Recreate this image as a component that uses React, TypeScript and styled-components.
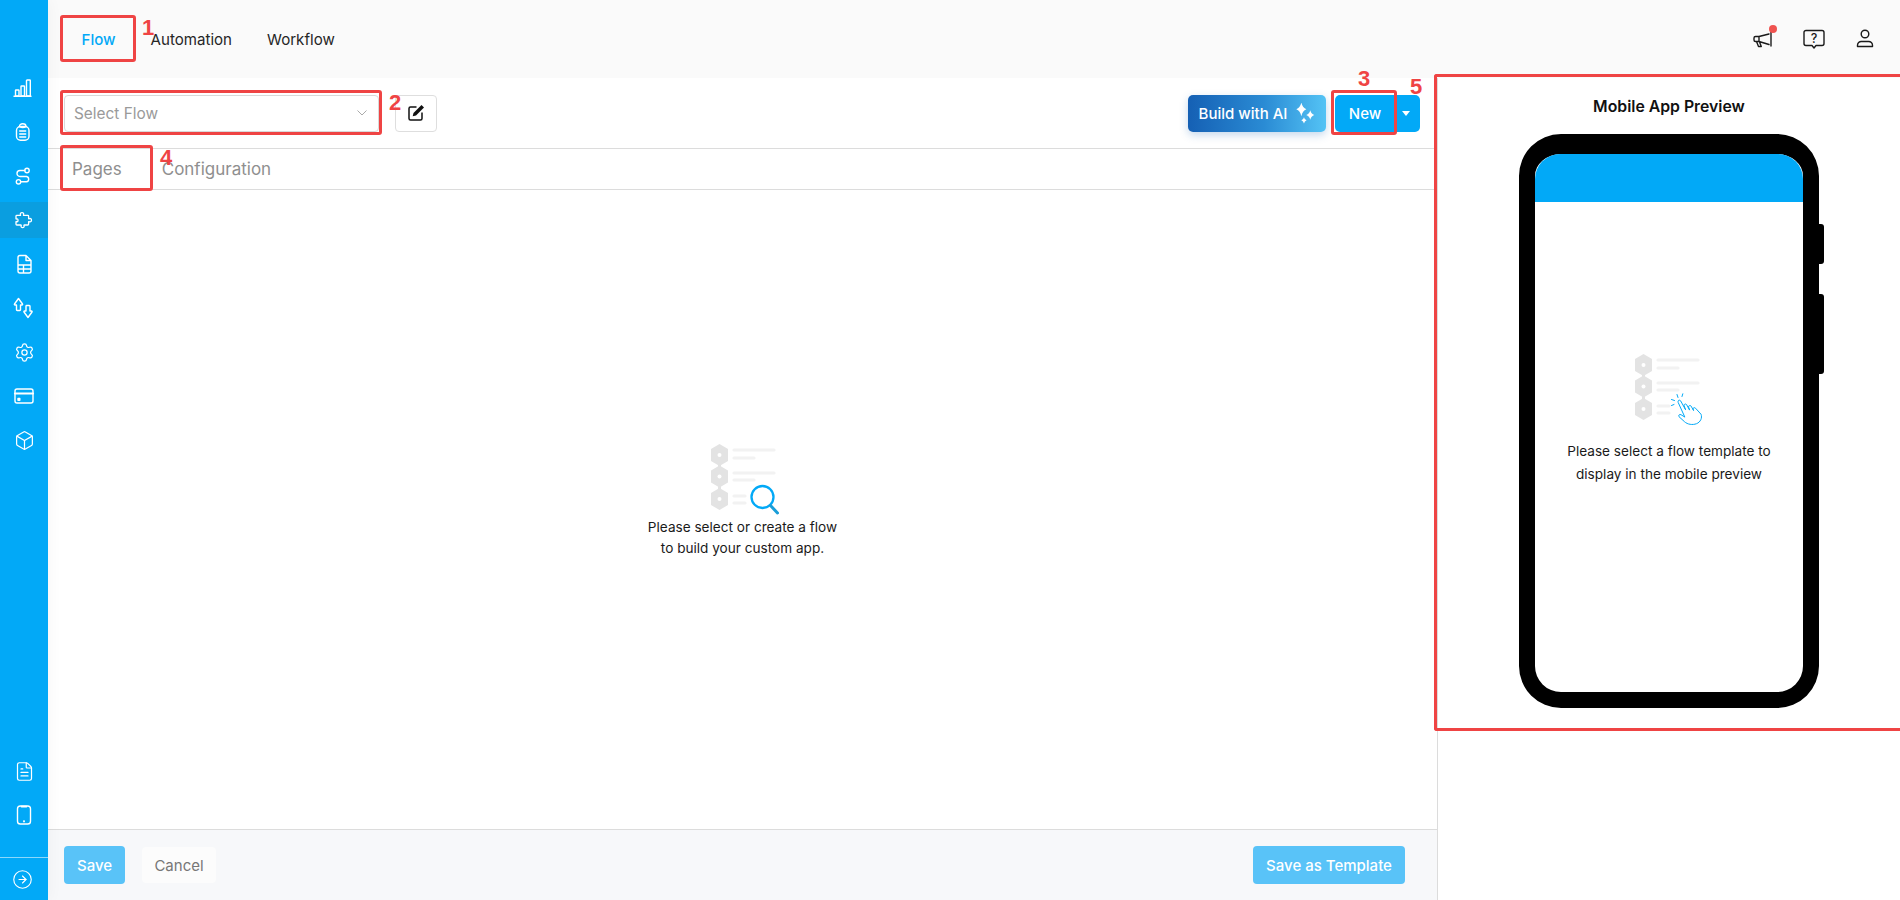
import React from "react";
import styled, { createGlobalStyle } from "styled-components";
import { Settings, Box, FileText, CircleArrowRight } from "lucide-react";

const Global = createGlobalStyle`
  html, body { margin: 0; padding: 0; background: #fff; }
  body { font-family: Inter, "Liberation Sans", sans-serif; color: #111; }
  * { box-sizing: border-box; }
`;

const BLUE = "#02a9f7";

const Shell = styled.div`
  position: relative;
  display: flex;
  width: 100vw;
  height: 100vh;
  overflow: hidden;
`;
const Sidebar = styled.nav`
  flex: 0 0 48px;
  display: flex;
  flex-direction: column;
  padding-top: 70px;
  background: ${BLUE};
  box-shadow: 2px 0 14px rgba(0, 0, 0, 0.035);
  z-index: 1;
`;
const SideGroup = styled.div`
  display: flex;
  flex-direction: column;
  gap: 8px;
`;
const SideBottom = styled(SideGroup)`
  margin-top: auto;
  margin-bottom: 24px;
`;
const SideItem = styled.div<{ $active?: boolean }>`
  height: 36px;
  display: flex;
  align-items: center;
  justify-content: center;
  color: #fff;
  background: ${(p) => (p.$active ? "#0a9ee0" : "transparent")};
`;
const SideFooter = styled.div`
  height: 43px;
  display: flex;
  align-items: center;
  justify-content: center;
  padding-right: 4px;
  color: #fff;
  border-top: 1px solid rgba(255, 255, 255, 0.55);
`;
const Main = styled.div`
  flex: 1;
  min-width: 0;
  display: flex;
  flex-direction: column;
`;
const TopBar = styled.header`
  flex: 0 0 78px;
  display: flex;
  align-items: center;
  justify-content: space-between;
  padding: 2px 23px 0 16px;
  background: #fafafa;
`;
const Nav = styled.div`
  display: flex;
  align-items: center;
`;
const NavTab = styled.div<{ $active?: boolean }>`
  padding: 0 17.5px;
  font-size: 15.1px;
  line-height: 20px;
  color: ${(p) => (p.$active ? BLUE : "#262626")};
  font-weight: ${(p) => (p.$active ? 500 : 400)};
`;
const TopIcons = styled.div`
  display: flex;
  align-items: center;
  gap: 27px;
  margin-top: -2px;
  color: #1a1a1a;
`;
const IconWrap = styled.div`
  position: relative;
  width: 24px;
  height: 24px;
`;
const Dot = styled.span`
  position: absolute;
  top: -2px;
  right: -2px;
  width: 8px;
  height: 8px;
  border-radius: 50%;
  background: #ef5350;
`;
const Body = styled.div`
  flex: 1;
  min-height: 0;
  display: flex;
`;
const LeftPanel = styled.section`
  flex: 0 0 1390px;
  display: flex;
  flex-direction: column;
  border-right: 1px solid #dcdcdc;
`;
const Toolbar = styled.div`
  flex: 0 0 71px;
  display: flex;
  align-items: center;
  gap: 16px;
  padding: 0 17px 0 16px;
  border-bottom: 1px solid #dcdcdc;
`;
const SelectBox = styled.div`
  width: 315px;
  height: 37px;
  display: flex;
  align-items: center;
  justify-content: space-between;
  padding: 0 10px 0 9px;
  background: #fff;
  border: 1px solid #d9d9d9;
  border-radius: 4px;
  font-size: 15.4px;
  color: #9a9a9a;
`;
const EditButton = styled.div`
  width: 42px;
  height: 37px;
  display: flex;
  align-items: center;
  justify-content: center;
  border: 1px solid #dedede;
  border-radius: 4px;
`;
const ToolbarRight = styled.div`
  margin-left: auto;
  display: flex;
  align-items: center;
  gap: 9px;
`;
const AiButton = styled.div`
  width: 138px;
  height: 37px;
  display: flex;
  align-items: center;
  justify-content: center;
  gap: 7px;
  color: #fff;
  font-size: 15px;
  font-weight: 500;
  border-radius: 5px;
  background: linear-gradient(90deg, #1560b4 0%, #2a8bd4 55%, #54c3f5 100%);
  box-shadow: 0 3px 8px rgba(21, 96, 180, 0.25);
`;
const SplitButton = styled.div`
  display: flex;
  height: 37px;
  border-radius: 5px;
  overflow: hidden;
  background: ${BLUE};
  color: #fff;
  font-size: 15px;
  font-weight: 500;
`;
const SplitMain = styled.div`
  width: 60px;
  display: flex;
  align-items: center;
  justify-content: center;
`;
const SplitCaret = styled.div`
  width: 25px;
  display: flex;
  align-items: center;
  justify-content: center;
  &::after {
    content: "";
    border-left: 4px solid transparent;
    border-right: 4px solid transparent;
    border-top: 5px solid #fff;
    margin-right: 3px;
  }
`;
const Tabs = styled.div`
  flex: 0 0 41px;
  display: flex;
  align-items: center;
  gap: 40px;
  padding: 0 24px;
  border-bottom: 1px solid #dcdcdc;
  font-size: 17px;
  color: #8f8f8f;
`;
const Empty = styled.div`
  flex: 1;
  display: flex;
  flex-direction: column;
  align-items: center;
  justify-content: center;
  padding-bottom: 20px;
`;
const EmptyText = styled.p<{ $lh: number }>`
  margin: 0;
  text-align: center;
  font-size: 13.6px;
  line-height: ${(p) => p.$lh}px;
  color: #1a1a1a;
`;
const Footer = styled.footer`
  flex: 0 0 71px;
  display: flex;
  align-items: center;
  gap: 17px;
  padding: 0 32px 0 16px;
  background: #f7f8fa;
  border-top: 1px solid #dcdcdc;
`;
const SoftButton = styled.div<{ $w: number }>`
  width: ${(p) => p.$w}px;
  height: 38px;
  display: flex;
  align-items: center;
  justify-content: center;
  background: #59c3f8;
  color: #fff;
  font-size: 15px;
  font-weight: 500;
  border-radius: 4px;
`;
const CancelButton = styled.div`
  width: 74px;
  height: 36px;
  display: flex;
  align-items: center;
  justify-content: center;
  background: #fcfcfc;
  color: #777;
  font-size: 15px;
  border-radius: 4px;
`;
const TemplateSlot = styled.div`
  margin-left: auto;
`;
const RightPanel = styled.aside`
  flex: 1;
  display: flex;
  flex-direction: column;
  align-items: center;
  padding-top: 19px;
`;
const PreviewTitle = styled.h2`
  margin: 0 0 17px;
  font-size: 15.8px;
  line-height: 20px;
  font-weight: 600;
  color: #111;
`;
const Phone = styled.div`
  position: relative;
  width: 300px;
  height: 574px;
  display: flex;
  flex-direction: column;
  background: #fff;
  border: solid #000;
  border-width: 20px 16px 16px;
  border-radius: 42px;
`;
const PhoneKey = styled.span<{ $top: number; $h: number }>`
  position: absolute;
  right: -21px;
  top: ${(p) => p.$top}px;
  width: 5px;
  height: ${(p) => p.$h}px;
  background: #000;
  border-radius: 0 3px 3px 0;
`;
const PhoneHeader = styled.div`
  flex: 0 0 48px;
  background: ${BLUE};
  border-radius: 25px 25px 0 0;
`;
const PhoneBody = styled.div`
  flex: 1;
  display: flex;
  flex-direction: column;
  align-items: center;
  justify-content: center;
  gap: 13px;
  padding-bottom: 58px;
`;
const Mark = styled.div<{ $x: number; $y: number; $w: number; $h: number }>`
  position: absolute;
  left: ${(p) => p.$x}px;
  top: ${(p) => p.$y}px;
  width: ${(p) => p.$w}px;
  height: ${(p) => p.$h}px;
  border: 3px solid #ef4444;
  border-radius: 3px;
  pointer-events: none;
  z-index: 2;
`;
const MarkOpen = styled(Mark)`
  border-right: none;
  border-radius: 3px 0 0 3px;
`;
const Num = styled.span<{ $x: number; $y: number }>`
  position: absolute;
  left: ${(p) => p.$x}px;
  top: ${(p) => p.$y}px;
  font-family: "Liberation Sans", Arial, sans-serif;
  font-weight: 700;
  font-size: 22px;
  line-height: 22px;
  color: #ef4444;
  z-index: 3;
`;

const Svg: React.FC<{ children: React.ReactNode; s?: number; w?: number }> = ({ children, s = 24, w = 1.4 }) => (
  <svg width={s} height={s} viewBox="0 0 24 24" fill="none" stroke="currentColor" strokeWidth={w} strokeLinecap="round" strokeLinejoin="round">
    {children}
  </svg>
);

const ChartIcon = () => (
  <Svg>
    <path d="M2 20.2H19" />
    <rect x="3.5" y="14" width="3.5" height="6" rx=".6" />
    <rect x="9" y="10" width="3.5" height="10" rx=".6" />
    <rect x="14.5" y="4" width="3.8" height="16" rx=".6" />
  </Svg>
);
const ClipIcon = () => (
  <Svg>
    <rect x="4.5" y="6.5" width="12.5" height="13.8" rx="4" />
    <path d="M7.5 6.5c0-1.8 1.2-2.7 3.2-2.7s3.3.9 3.3 2.7M7.5 6.6c1.8 1 4.7 1 6.5 0M7.7 11h6M7.7 14h6M7.7 17h6" />
  </Svg>
);
const RouteIcon = () => (
  <Svg>
    <circle cx="15" cy="6.5" r="2.2" />
    <circle cx="6.500" cy="17.800" r="2.200" />
    <path d="M12.800 6.500H8a3 3 0 0 0 0 6h6.500a2.700 2.700 0 0 1 0 5.300H8.700" />
  </Svg>
);
const PuzzleIcon = () => (
  <Svg w={1.3}>
    <path d="M4 8.200a.8.800 0 0 1 .8-.8H8.200c.4 0 .5-.3.3-.7-1.200-2.900 4.200-2.900 3 0-.2.400 0 .7.300.7H15.800a.8.800 0 0 1 .8.8v2.200c0 .4.300.5.700.3 2.900-1.200 2.900 4.200 0 3-.4-.2-.7 0-.7.300v2.200a.8.800 0 0 1-.8.8H12.300c-.4 0-.5.300-.3.700 1 2.500-3.800 2.500-2.800 0 .2-.4 0-.7-.3-.7H4.800a.8.800 0 0 1-.8-.8v-2.300c0-.4.300-.5.600-.3 1.900 1 1.900-3.500 0-2.600-.3.200-.6 0-.6-.3z" />
  </Svg>
);
const TableFileIcon = () => (
  <Svg>
    <path d="M8 3.500h6l5 5v10.500a2 2 0 0 1-2 2H8a2 2 0 0 1-2-2V5.500a2 2 0 0 1 2-2zM14 3.500v5h5M6 13h13M6 17h13M11.500 13v8" />
  </Svg>
);
const SwapIcon = () => (
  <Svg>
    <path d="M6.500 2.500l4 5.500c.3.500 0 1-.5 1H8.500v4.800a.7.700 0 0 1-.7.700H5.200a.7.700 0 0 1-.7-.7V9H3c-.5 0-.8-.5-.5-1z" />
    <path d="M16 21.500l4-5.500c.3-.5 0-1-.5-1H18v-4.800a.7.700 0 0 0-.7-.7h-2.600a.7.700 0 0 0-.7.700V15h-1.500c-.5 0-.8.500-.5 1z" />
  </Svg>
);
const CardIcon = () => (
  <Svg>
    <rect x="3" y="5" width="18" height="14" rx="2" />
    <path d="M3 9.500h18" strokeWidth="2.200" />
    <rect x="6" y="14.500" width="1.800" height="1.800" fill="currentColor" />
  </Svg>
);
const PhoneIcon = () => (
  <Svg>
    <rect x="5.500" y="3" width="13" height="18" rx="2.800" />
    <path d="M9.500 3.600h5" strokeWidth="1.800" />
    <circle cx="12" cy="18.300" r=".4" fill="currentColor" />
  </Svg>
);
const MegaphoneIcon = () => (
  <Svg>
    <path d="M20 5V19M18 7L8 9.500H4.500A1.500 1.500 0 0 0 3 11v2a1.500 1.500 0 0 0 1.500 1.500H8l10 3M5.500 14.500L7.500 19.500h2.800L8.500 14.900M8 9.500v5" />
  </Svg>
);
const HelpIcon = () => (
  <Svg>
    <path d="M4 3.500h16a2 2 0 0 1 2 2v11a2 2 0 0 1-2 2h-6l-2 2.500-2-2.500H4a2 2 0 0 1-2-2v-11a2 2 0 0 1 2-2z" />
    <text x="12" y="15.500" textAnchor="middle" fontFamily="Inter, sans-serif" fontSize="12.500" fontWeight="500" fill="currentColor" stroke="none">?</text>
  </Svg>
);
const UserIcon = () => (
  <Svg>
    <circle cx="12" cy="7" r="3.800" />
    <path d="M4.500 19.500v-1.200a3.800 3.800 0 0 1 3.800-3.800h7.400a3.800 3.800 0 0 1 3.800 3.800v1.200z" />
  </Svg>
);
const PenIcon = () => (
  <svg width="18" height="18" viewBox="0 0 18 18" fill="none">
    <path d="M9.500 3H3.500A1.500 1.500 0 0 0 2 4.500v10A1.500 1.500 0 0 0 3.500 16h10a1.500 1.500 0 0 0 1.500-1.500V8.500" stroke="#111" strokeWidth="1.500" />
    <path d="M14.500 1L17 3.500 9 11.500l-3.300.8.800-3.300z" fill="#111" />
  </svg>
);
const Chevron = () => (
  <svg width="12" height="8" viewBox="0 0 12 8" fill="none">
    <path d="M1.500 1.500L6 6l4.500-4.500" stroke="#aaa" strokeWidth="1" />
  </svg>
);
const star = (cx: number, cy: number, rx: number, ry: number) =>
  `M${cx} ${cy - ry}Q${cx + rx * 0.22} ${cy - ry * 0.22} ${cx + rx} ${cy}Q${cx + rx * 0.22} ${cy + ry * 0.22} ${cx} ${cy + ry}Q${cx - rx * 0.22} ${cy + ry * 0.22} ${cx - rx} ${cy}Q${cx - rx * 0.22} ${cy - ry * 0.22} ${cx} ${cy - ry}Z`;
const Sparkles = () => (
  <svg width="21" height="21" viewBox="0 0 20 20" fill="#fff">
    <path d={star(7, 6, 4.8, 6.5)} />
    <path d={star(15.5, 11.5, 3.8, 4.5)} />
    <path d={star(9.5, 16.5, 2.5, 3)} />
  </svg>
);

const FlowGraphic: React.FC<{ width: number; children: React.ReactNode }> = ({ width, children }) => (
  <svg width={width} height={76} viewBox={`0 0 ${width} 76`} fill="none">
    <path d="M12.500 14V58" stroke="#e3e3e3" strokeWidth="3" />
    {[14, 35.500, 58].map((y) => (
      <g key={y}>
        <path d={`M12.500 ${y - 11}L21 ${y - 6}V${y + 6}L12.500 ${y + 11}L4 ${y + 6}V${y - 6}Z`} fill="#e3e3e3" />
        <circle cx="12.500" cy={y} r="2" fill="#fff" />
      </g>
    ))}
    <g stroke="#f2f2f2" strokeWidth="3.200" strokeLinecap="round">
      <path d="M27 9H67M27 17H47M27 32H67M27 39H47M27 55H38M27 62H38" />
    </g>
    {children}
  </svg>
);
const Magnifier = () => (
  <g>
    <circle cx="55.500" cy="56" r="11" fill="#fff" stroke={BLUE} strokeWidth="2.300" />
    <path d="M63.500 64.500L70.500 72" stroke="#1a9ed8" strokeWidth="3" strokeLinecap="round" />
  </g>
);
const Hand = () => (
  <g stroke={BLUE} strokeWidth="1" strokeLinecap="round" strokeLinejoin="round" fill="#fff">
    <path d="M47 51c-.6-1.600 1.600-2.600 2.600-1.200l5 9-1.500-4c-.5-1.500 1.500-2.500 2.500-1.200l3 5.500-1-3c-.4-1.400 1.600-2.200 2.500-1l2.500 4.500-.5-1.500c-.3-1.300 1.600-2 2.400-.9l5.500 6c1.500 3.500-.5 8-4.500 9.500-4 1.500-9 .8-12-2l-5.500-5c-1-1.200.5-2.800 2-2l3.500 2.200z" />
    <path d="M47 46.500l-1-3M43.500 49.500l-3-1M43 53.500l-2.500 1M51 45.500l.8-2.700" fill="none" />
  </g>
);

export default function App() {
  return (
    <Shell>
      <Global />
      <Sidebar>
        <SideGroup>
          <SideItem><ChartIcon /></SideItem>
          <SideItem><ClipIcon /></SideItem>
          <SideItem><RouteIcon /></SideItem>
          <SideItem $active><PuzzleIcon /></SideItem>
          <SideItem><TableFileIcon /></SideItem>
          <SideItem><SwapIcon /></SideItem>
          <SideItem><Settings size={21} strokeWidth={1.4} /></SideItem>
          <SideItem><CardIcon /></SideItem>
          <SideItem><Box size={21} strokeWidth={1.4} /></SideItem>
        </SideGroup>
        <SideBottom>
          <SideItem><FileText size={21} strokeWidth={1.4} /></SideItem>
          <SideItem><PhoneIcon /></SideItem>
        </SideBottom>
        <SideFooter><CircleArrowRight size={21} strokeWidth={1.3} /></SideFooter>
      </Sidebar>
      <Main>
        <TopBar>
          <Nav>
            <NavTab $active>Flow</NavTab>
            <NavTab>Automation</NavTab>
            <NavTab>Workflow</NavTab>
          </Nav>
          <TopIcons>
            <IconWrap><MegaphoneIcon /><Dot /></IconWrap>
            <IconWrap><HelpIcon /></IconWrap>
            <IconWrap><UserIcon /></IconWrap>
          </TopIcons>
        </TopBar>
        <Body>
          <LeftPanel>
            <Toolbar>
              <SelectBox>Select Flow<Chevron /></SelectBox>
              <EditButton><PenIcon /></EditButton>
              <ToolbarRight>
                <AiButton>Build with AI<Sparkles /></AiButton>
                <SplitButton>
                  <SplitMain>New</SplitMain>
                  <SplitCaret />
                </SplitButton>
              </ToolbarRight>
            </Toolbar>
            <Tabs>
              <span>Pages</span>
              <span>Configuration</span>
            </Tabs>
            <Empty>
              <FlowGraphic width={72}><Magnifier /></FlowGraphic>
              <EmptyText $lh={21}>Please select or create a flow<br />to build your custom app.</EmptyText>
            </Empty>
            <Footer>
              <SoftButton $w={61}>Save</SoftButton>
              <CancelButton>Cancel</CancelButton>
              <TemplateSlot><SoftButton $w={152}>Save as Template</SoftButton></TemplateSlot>
            </Footer>
          </LeftPanel>
          <RightPanel>
            <PreviewTitle>Mobile App Preview</PreviewTitle>
            <Phone>
              <PhoneKey $top={70} $h={40} />
              <PhoneKey $top={140} $h={80} />
              <PhoneHeader />
              <PhoneBody>
                <FlowGraphic width={76}><Hand /></FlowGraphic>
                <EmptyText $lh={23}>Please select a flow template to<br />display in the mobile preview</EmptyText>
              </PhoneBody>
            </Phone>
          </RightPanel>
        </Body>
      </Main>

      <Mark $x={60} $y={15} $w={76} $h={47} />
      <Mark $x={60} $y={90} $w={322} $h={45} />
      <Mark $x={60} $y={145} $w={93} $h={46} />
      <Mark $x={1331} $y={90} $w={66} $h={45} />
      <MarkOpen $x={1434} $y={74} $w={466} $h={657} />
      <Num $x={142} $y={17}>1</Num>
      <Num $x={389} $y={92}>2</Num>
      <Num $x={1358} $y={68}>3</Num>
      <Num $x={160} $y={147}>4</Num>
      <Num $x={1410} $y={76}>5</Num>
    </Shell>
  );
}
